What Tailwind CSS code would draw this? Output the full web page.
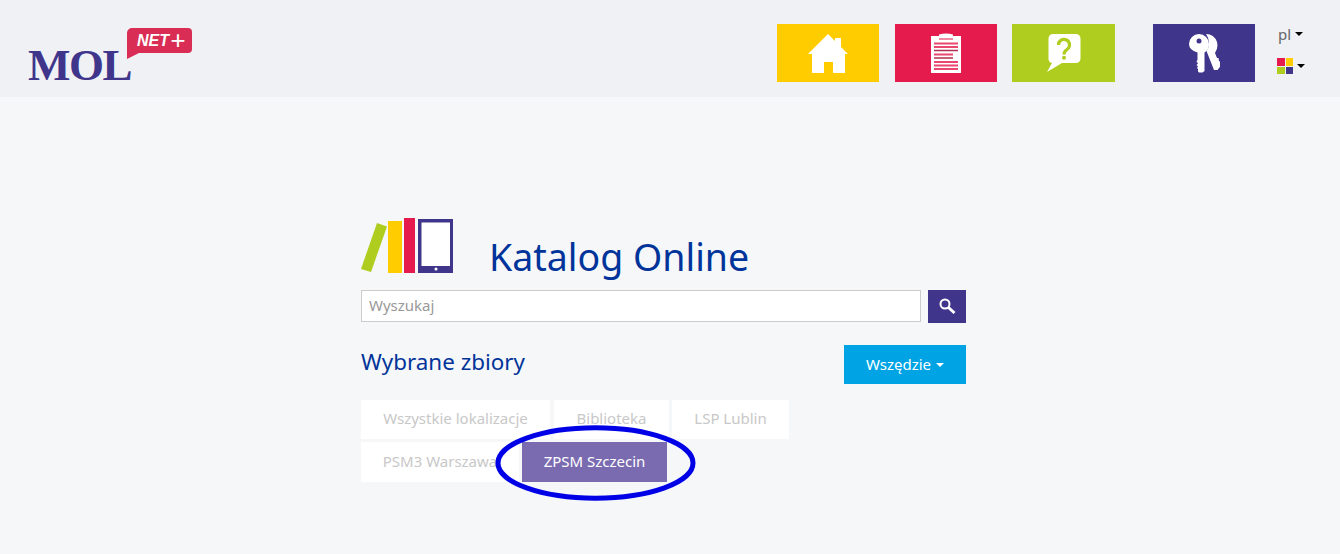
<!DOCTYPE html>
<html lang="en">

<head>
    <meta charset="UTF-8">
    <title>Katalog Online</title>
    <script src="https://cdn.jsdelivr.net/npm/@tailwindcss/browser@4"></script>
</head>

<body class="bg-[#f6f7f9] font-['Noto_Sans',sans-serif] h-[554px] overflow-hidden">
    <!-- Header -->
    <header class="h-[97px] bg-[#f0f1f5] flex pt-[24px]">
        <!-- Logo -->
        <div class="relative w-[777px] shrink-0">
            <span class="absolute left-[28px] top-[13px] font-['Liberation_Serif',serif] font-bold text-[#3f368c] text-[45px] leading-[56px] tracking-[-1.500px]">MOL</span>
            <svg class="absolute left-[125px] top-[2px]" width="68" height="34" viewBox="0 0 68 34">
                <path d="M2 27V7a5 5 0 0 1 5-5h56a4 4 0 0 1 4 4v17a4 4 0 0 1-4 4H14L2 33z" fill="#d92d55" />
            </svg>
            <span class="absolute left-[137px] top-[4px] font-['Liberation_Sans',sans-serif] font-bold italic text-white text-[16px] leading-[26px]">NET</span>
            <span class="absolute left-[170px] top-[3px] font-['Liberation_Sans',sans-serif] italic text-white text-[26px] leading-[26px]">+</span>
        </div>

        <!-- Tiles -->
        <a class="w-[102px] h-[58px] bg-[#ffcc00] flex items-center justify-center">
            <svg width="40" height="40" viewBox="0 0 40 40" fill="#fff">
                <path d="M20 1L0 21h4V40h12V29h9V40h12V21h3L33 14V5H27V8z" />
            </svg>
        </a>
        <a class="ml-[16px] w-[102px] h-[58px] bg-[#e61b4d] flex items-center justify-center">
            <svg width="30" height="40" viewBox="0 0 30 40">
                <path d="M0 3h8V1.500Q15-.5 22 1.500V3h8v37H0z" fill="#fff" />
                <path d="M8 6h14" stroke="#e61b4d" stroke-width="1" />
                <path d="M3 10.500h24M3 14h24M3 21.500h19M3 29h24M3 32.500h24M3 36h24" stroke="#e8476f" stroke-width="2" />
                <path d="M3 17.500h24M3 25h19" stroke="#b03052" stroke-width="1.500" />
            </svg>
        </a>
        <a class="ml-[15px] w-[103px] h-[58px] bg-[#afcd1f] flex items-center justify-center">
            <svg width="36" height="40" viewBox="0 0 36 40">
                <path d="M7 1h23a4.500 4.500 0 0 1 4.500 4.500v20a4.500 4.500 0 0 1-4.500 4.500H16L1 39l5-9a4.500 4.500 0 0 1-3.500-4.500v-20A4.500 4.500 0 0 1 7 1z" fill="#fff" />
                <path d="M12.500 12a5.500 5.500 0 1 1 8.500 4.500q-3 2-3 5" fill="none" stroke="#afcd1f" stroke-width="3.200" />
                <circle cx="18" cy="24.800" r="2" fill="#afcd1f" />
            </svg>
        </a>
        <a class="ml-[38px] w-[102px] h-[58px] bg-[#3f368c] flex items-center justify-center">
            <svg width="32" height="40" viewBox="0 0 32 40" fill="#fff">
                <path d="M18 1q8 0 11 8 1.500 6-2 11l2 5 1.500 0 .5 3 1.500 1 0 4-3 4-3.500 0-7.500-19q2.500-3 2.500-8t-3-9z" />
                <path d="M11 1a10 10 0 0 1 10 10q0 6-4.500 8.500V38l-2 1.500h-3.500l-1-1V36l-1-1 1-1.500-1.500-1.500 1.500-1.500-1.500-2 1-1.500V19.500Q1 17 1 11A10 10 0 0 1 11 1z" />
                <circle cx="11" cy="8" r="2.500" fill="#3f368c" />
            </svg>
        </a>

        <!-- Language and contrast -->
        <div class="ml-[22px] flex flex-col items-start">
            <button class="h-[20px] pl-px flex items-center gap-[4px] text-[#666] text-[15px] leading-[20px]">pl<span class="w-0 h-0 border-x-4 border-x-transparent border-t-4 border-t-black"></span></button>
            <button class="mt-[14px] flex items-center gap-[4px]">
                <span class="grid grid-cols-2 gap-px w-[16px]">
                    <i class="h-[7.500px] bg-[#e61b4d]"></i>
                    <i class="h-[7.500px] bg-[#ffcc00]"></i>
                    <i class="h-[7.500px] bg-[#afcd1f]"></i>
                    <i class="h-[7.500px] bg-[#3f368c]"></i>
                </span>
                <span class="w-0 h-0 border-x-4 border-x-transparent border-t-4 border-t-black"></span>
            </button>
        </div>
    </header>

    <!-- Catalog -->
    <main class="relative ml-[361px] w-[605px] pt-[121px]">
        <div class="flex items-start h-[72px]">
            <svg width="92" height="55" viewBox="0 0 92 55" class="shrink-0">
                <path d="M16 5l10 3.500L10 54 0 51z" fill="#afcd1f" />
                <rect x="27" y="3" width="14" height="52" fill="#ffcc00" />
                <rect x="43" y="0" width="11" height="55" fill="#e61b4d" />
                <rect x="57" y="1" width="35" height="54" fill="#3f368c" />
                <rect x="60.500" y="4.500" width="28.500" height="43.500" fill="#fff" />
                <circle cx="75" cy="51" r="1.500" fill="#fff" />
            </svg>
            <h1 class="ml-[36px] mt-[17px] text-[#00349a] text-[37.500px] leading-[44px] whitespace-nowrap">Katalog Online</h1>
        </div>

        <div class="flex h-[33px]">
            <input class="w-[560px] h-[32px] bg-white border border-[#ccc] px-[7px] pb-[2px] text-[15px] text-[#555] placeholder:text-[#999] outline-none" placeholder="Wyszukaj">
            <button class="ml-[7px] w-[38px] h-[33px] bg-[#3f368c] flex items-center justify-center">
                <svg width="18" height="18" viewBox="0 0 18 18" fill="none" stroke="#fff">
                    <circle cx="7" cy="6" r="4.500" stroke-width="2" />
                    <path d="M10.500 9.500l6 5.500" stroke-width="3" />
                </svg>
            </button>
        </div>

        <div class="flex items-center justify-between mt-[22px] h-[39px]">
            <h2 class="text-[#00349a] text-[22.400px] leading-[28px] mb-[6px]">Wybrane zbiory</h2>
            <button class="w-[122px] h-[39px] bg-[#00a4e4] text-white text-[15px] flex items-center justify-center gap-[5px]">
                Wszędzie<span class="w-0 h-0 border-x-4 border-x-transparent border-t-4 border-t-white"></span>
            </button>
        </div>

        <div class="mt-[16px] flex text-[15px] text-[#c8c8c8]">
            <a class="w-[189px] h-[39px] bg-white flex items-center justify-center pb-[2px]">Wszystkie lokalizacje</a>
            <a class="ml-[4px] w-[115px] h-[39px] bg-white flex items-center justify-center pb-[2px]">Biblioteka</a>
            <a class="ml-[3px] w-[117px] h-[39px] bg-white flex items-center justify-center pb-[2px]">LSP Lublin</a>
        </div>
        <div class="mt-[3px] flex gap-[3px] text-[15px]">
            <a class="w-[158px] h-[40px] bg-white text-[#c8c8c8] flex items-center justify-center pb-[2px]">PSM3 Warszawa</a>
            <a class="w-[145px] h-[40px] bg-[#7a6bb1] text-white flex items-center justify-center pb-[2px]">ZPSM Szczecin</a>
        </div>

        <!-- Annotation drawn over the screenshot -->
        <svg class="absolute left-[132px] top-[327px]" width="206" height="78" viewBox="0 0 206 78" fill="none">
            <ellipse cx="102.500" cy="39" rx="97.500" ry="35.200" stroke="#0000e6" stroke-width="5" />
        </svg>
    </main>
</body>

</html>
